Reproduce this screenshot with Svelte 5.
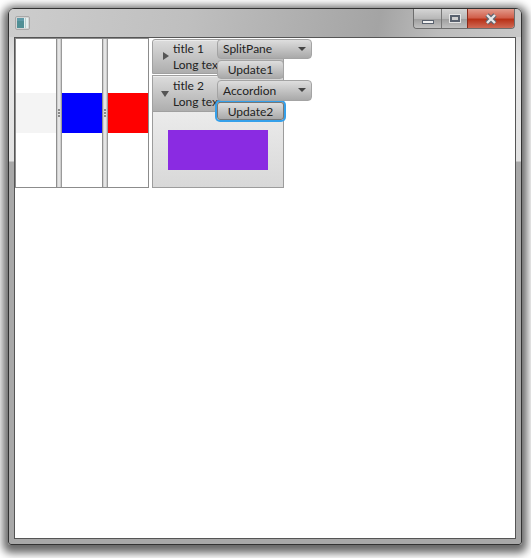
<script>
  const panes = ['#f4f4f4', '#0000ff', '#ff0000'];
</script>

<div class="desktop">
  <div class="window">
    <header class="titlebar">
      <svg class="app-icon" width="15" height="14" viewBox="0 0 15 14">
        <rect x="0.5" y="0.5" width="14" height="13" rx="1.5" fill="#d4d4d4" stroke="#a8a8a8" />
        <rect x="2" y="2" width="7" height="10" fill="#4f8f95" />
        <rect x="2" y="2" width="7" height="3" fill="#5f9aa8" />
        <rect x="9" y="2" width="4" height="10" fill="#e2eeee" />
        <rect x="10" y="2" width="1" height="10" fill="#b4cccc" />
      </svg>
      <div class="caption-buttons">
        <button class="cap min" aria-label="Minimize"><span></span></button>
        <button class="cap max" aria-label="Maximize"><span></span></button>
        <button class="cap close" aria-label="Close">
          <svg width="14" height="12" viewBox="0 0 14 12">
            <path d="M3 2 L11 10 M11 2 L3 10" stroke="#5f6672" stroke-width="4.6" />
            <path d="M3 2 L11 10 M11 2 L3 10" stroke="#e8e8e8" stroke-width="2.4" />
          </svg>
        </button>
      </div>
    </header>

    <main class="content">
      <div class="stage">
        <div class="split">
          {#each panes as color, i}
            {#if i > 0}
              <div class="divider"><i></i><i></i><i></i></div>
            {/if}
            <div class="pane"><div class="swatch" style="background: {color}"></div></div>
          {/each}
        </div>

        <div class="right">
          <div class="accordion">
            <div class="tp-title">
              <span class="arrow closed"></span>
              <div class="tp-text"><span>title 1</span><span>Long text</span></div>
            </div>
            <div class="tp-title second">
              <span class="arrow open"></span>
              <div class="tp-text"><span>title 2</span><span>Long text</span></div>
            </div>
            <div class="tp-body"><div class="purple"></div></div>
          </div>

          <div class="controls">
            <div class="combo">SplitPane<span class="combo-arrow"></span></div>
            <button class="btn">Update1</button>
            <div class="combo tall">Accordion<span class="combo-arrow"></span></div>
            <button class="btn focused">Update2</button>
          </div>
        </div>
      </div>
    </main>
  </div>
</div>

<style>
  :global(body) {
    margin: 0;
    background: #fff;
  }

  .desktop {
    width: 531px;
    height: 558px;
    box-sizing: border-box;
    padding: 8px 9px 13px 8px;
    overflow: hidden;
    font-family: Lato, "Liberation Sans", Arial, sans-serif;
    background: #fff;
  }

  .window {
    height: 100%;
    box-sizing: border-box;
    border: 1px solid #333;
    border-radius: 6px 6px 3px 3px;
    padding: 0 5px 5px 5px;
    display: flex;
    flex-direction: column;
    background: linear-gradient(#c8c8c8 0, #e6e6e6 60px, #e2e2e2 152px, #a8a8a8 153px, #a8a8a8 100%);
    box-shadow: 0 3px 9px 5px rgba(0, 0, 0, 0.6);
    overflow: hidden;
  }

  .titlebar {
    height: 28px;
    flex: none;
    margin: 0 -5px;
    padding: 0 6px 0 5px;
    display: flex;
    justify-content: space-between;
    background: linear-gradient(100deg, #cdcdcd 0%, #bfbfbf 35%, #a4a4a4 72%, #bdbdbd 84%, #c8c8c8 100%);
  }

  .app-icon {
    margin: 7px 0 0 1px;
  }

  .caption-buttons {
    display: flex;
    height: 19px;
    border: 1px solid #6d6d6d;
    border-top: none;
    border-radius: 0 0 4px 4px;
    overflow: hidden;
  }

  .cap {
    border: none;
    padding: 0;
    display: flex;
    align-items: center;
    justify-content: center;
    background: linear-gradient(#d5d5d5, #b8b8b8 50%, #a0a0a0 55%, #c0c0c0);
  }

  .min {
    width: 28px;
    border-right: 1px solid #777;
  }

  .min span {
    width: 10px;
    height: 2px;
    margin-top: 7px;
    background: #f0f0f0;
    border: 1px solid #59616e;
  }

  .max {
    width: 26px;
    border-right: 1px solid #8a2a1a;
  }

  .max span {
    width: 6px;
    height: 3px;
    border: 2px solid #59616e;
    outline: 1px solid #e4e4e4;
    background: #cfcfcf;
  }

  .close {
    width: 46px;
    background: linear-gradient(#e29a8b, #d1604c 45%, #b93218 55%, #cf6a55);
  }

  .content {
    flex: 1;
    background: #fff;
    border: 1px solid #555;
  }

  .stage {
    display: flex;
    align-items: flex-start;
    gap: 3px;
  }

  .split {
    width: 134px;
    height: 150px;
    box-sizing: border-box;
    border: 1px solid #8c8c8c;
    display: flex;
    background: #fff;
  }

  .pane {
    flex: 1;
    display: flex;
    align-items: center;
  }

  .swatch {
    width: 100%;
    height: 40px;
  }

  .divider {
    width: 6px;
    flex: none;
    box-sizing: border-box;
    border-left: 1px solid #8f8f8f;
    border-right: 1px solid #9a9a9a;
    background: linear-gradient(90deg, #c4c4c4, #f0f0f0 50%, #c2c2c2);
    display: flex;
    flex-direction: column;
    align-items: center;
    justify-content: center;
    gap: 1px;
  }

  .divider i {
    width: 2px;
    height: 2px;
    background: #8a8a8a;
  }

  .right {
    display: grid;
    margin-top: 1px;
  }

  .accordion,
  .controls {
    grid-area: 1 / 1;
  }

  .accordion {
    width: 132px;
    height: 149px;
    box-sizing: border-box;
    display: flex;
    flex-direction: column;
  }

  .tp-title {
    height: 35px;
    flex: none;
    box-sizing: border-box;
    border: 1px solid #a0a0a0;
    border-radius: 3px 3px 0 0;
    background: linear-gradient(#dcdcdc, #aeaeae);
    box-shadow: inset 0 1px 0 #ececec;
    display: flex;
    font-size: 12px;
    color: #222;
  }

  .second {
    height: 37px;
    margin-top: 1px;
    border-radius: 0;
  }

  .tp-text {
    display: flex;
    flex-direction: column;
    margin-left: 4px;
    padding-top: 1px;
    line-height: 16px;
    white-space: nowrap;
  }

  .second .tp-text {
    padding-top: 2px;
  }

  .arrow {
    width: 0;
    height: 0;
    flex: none;
  }

  .arrow.closed {
    margin: 12px 0 0 10px;
    border-left: 6px solid #555;
    border-top: 4px solid transparent;
    border-bottom: 4px solid transparent;
  }

  .arrow.open {
    margin: 15px 0 0 8px;
    border-top: 6px solid #555;
    border-left: 4px solid transparent;
    border-right: 4px solid transparent;
  }

  .tp-body {
    flex: 1;
    box-sizing: border-box;
    border: 1px solid #9c9c9c;
    border-top: none;
    background: linear-gradient(#ebebeb, #d8d8d8);
    padding: 18px 0 0 15px;
  }

  .purple {
    width: 100px;
    height: 40px;
    background: #8a2be2;
  }

  .controls {
    margin-left: 65px;
    display: flex;
    flex-direction: column;
    align-items: flex-start;
    font-size: 12px;
    color: #222;
  }

  .combo {
    width: 95px;
    height: 20px;
    box-sizing: border-box;
    border: 1px solid #a4a4a4;
    border-radius: 4px;
    background: linear-gradient(#dedede, #a9a9a9);
    padding-left: 5px;
    line-height: 18px;
    position: relative;
  }

  .tall {
    height: 21px;
    line-height: 20px;
  }

  .combo-arrow {
    position: absolute;
    right: 5px;
    top: 7px;
    border-top: 4px solid #444;
    border-left: 4px solid transparent;
    border-right: 4px solid transparent;
  }

  .btn {
    width: 67px;
    height: 19px;
    margin: 1px 0;
    padding: 0;
    box-sizing: border-box;
    border: 1px solid #a4a4a4;
    border-radius: 4px;
    background: linear-gradient(#dedede, #a9a9a9);
    font: inherit;
    color: inherit;
  }

  .focused {
    height: 18px;
    margin-top: 1px;
    border: 1px solid #777;
    border-radius: 3px;
    box-shadow: 0 0 0 2px #35a0ea;
  }
</style>
